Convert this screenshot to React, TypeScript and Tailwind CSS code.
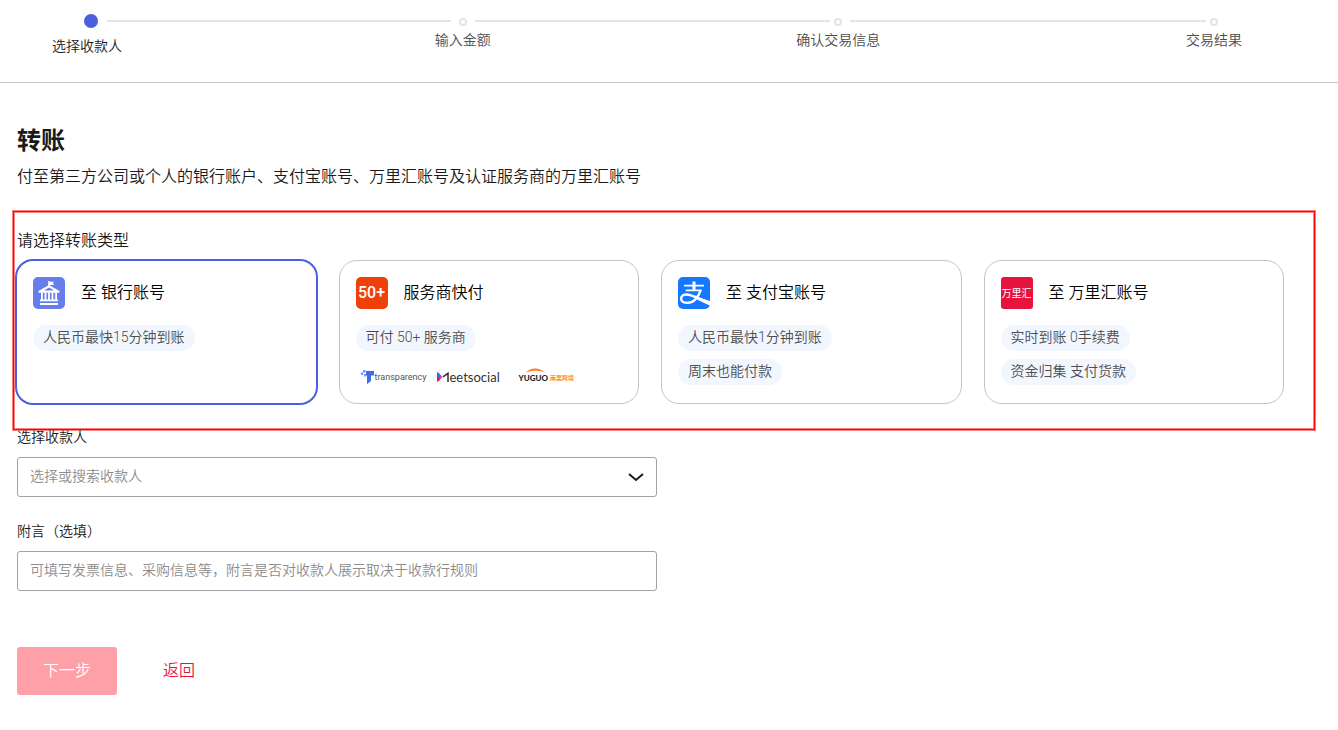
import type { ReactNode } from "react";
import clsx from "clsx";

const steps = ["选择收款人", "输入金额", "确认交易信息", "交易结果"];

const BankIcon = () => (
  <svg viewBox="0 0 32 32" className="size-8 shrink-0" aria-hidden="true">
    <rect width="32" height="32" rx="5" fill="#667eea" />
    <path d="M15.2 4h1.4v.8h4.3l-1 1.5 1 1.6h-4.3v1.4h-1.4z" fill="#fff" />
    <path d="M16 8 26.4 14v1.8H5.6V14z" fill="#fff" />
    <path d="m16 10.4 5 3.2H11z" fill="#667eea" />
    <path
      d="M8 15.5h1.8v7.5H8zM11.6 15.5h1.8v7.5h-1.8zM15.1 15.5h1.8v7.5h-1.8zM18.6 15.5h1.8v7.5h-1.8zM22.2 15.5H24v7.5h-1.8z"
      fill="#fff"
    />
    <path d="M7 22.6h18v1.6H7zM7 26h18v2H7z" fill="#fff" />
  </svg>
);

const AlipayIcon = () => (
  <svg viewBox="0 0 32 32" className="size-8 shrink-0" aria-hidden="true">
    <rect width="32" height="32" rx="5" fill="#1677ff" />
    <g fill="none" stroke="#fff">
      <path d="M6 8.7h20M7.7 13.4h16" strokeWidth="1.7" />
      <path d="M16 4.5v9" strokeWidth="3" />
      <path
        d="M22.7 13.2c-1.8 5.6-6.2 12.7-13.2 12.7-3.8 0-6.4-1.8-6.4-4.4 0-2.4 2.3-4 5.2-4 5.8 0 12 4 23.7 8.6"
        strokeWidth="2.4"
      />
    </g>
    <path d="M20 20.2 32 24v4.8l-13-6.3z" fill="#fff" />
  </svg>
);

const PartnerLogos = () => (
  <div className="mt-4 flex h-5 items-center pl-1">
    <div className="flex w-[76px] items-center">
      <svg viewBox="0 0 15 15" className="size-[15px]" aria-hidden="true">
        <path d="M6 1h8v4.5h-3V11l-4 3V5.5H6z" fill="#4169e8" />
        <path d="M3 0h2.5v2.5H3zM1 2.5h2V5H1zM4 4h2v2.5H4z" fill="#6f95ff" />
      </svg>
      <span className="text-[9px] font-normal leading-4 text-[#555]">transparency</span>
    </div>
    <div className="flex w-[82px] items-center">
      <svg viewBox="0 0 14 12" className="h-3 w-3.5" aria-hidden="true">
        <path d="M1 1v5h4.5L3.5 2.5z" fill="#1677ff" />
        <path d="M1 11V6h4.5L3.5 9.5z" fill="#ed1c35" />
        <path d="M3.5 3 6.5 6l-3 3z" fill="#d43bd0" />
        <path d="m7 5.8 5-3.5V11" fill="none" stroke="#333" strokeWidth="1.5" />
      </svg>
      <span className="font-['Lato'] text-[13px] font-normal leading-4 text-[#333]">eetsocial</span>
    </div>
    <div className="relative flex items-center gap-0.5 pl-px pt-0.5">
      <svg viewBox="0 0 20 5" className="absolute left-2 top-0 h-[5px] w-5" aria-hidden="true">
        <path d="M0 4.5C5-1 13-1 19 4.5 13 2 6 2 0 4.5z" fill="#ff7b1c" />
      </svg>
      <span className="font-['Lato'] text-[8px] font-black leading-4 text-[#222]">YUGUO</span>
      <span className="text-[6px] font-bold leading-4 text-[#ff8a35]">雨果跨境</span>
    </div>
  </div>
);

type TransferType = {
  id: string;
  title: string;
  icon: ReactNode;
  tags: string[];
  footer?: ReactNode;
};

const transferTypes: TransferType[] = [
  { id: "bank", title: "至 银行账号", icon: <BankIcon />, tags: ["人民币最快15分钟到账"] },
  {
    id: "provider",
    title: "服务商快付",
    icon: (
      <span className="flex size-8 shrink-0 items-center justify-center rounded-[5px] bg-[#f0400a] text-base font-medium text-white">
        50+
      </span>
    ),
    tags: ["可付 50+ 服务商"],
    footer: <PartnerLogos />,
  },
  { id: "alipay", title: "至 支付宝账号", icon: <AlipayIcon />, tags: ["人民币最快1分钟到账", "周末也能付款"] },
  {
    id: "worldfirst",
    title: "至 万里汇账号",
    icon: (
      <span className="flex size-8 shrink-0 items-center justify-center rounded-[3px] bg-[#e6143c] text-[10px] font-normal text-white">
        万里汇
      </span>
    ),
    tags: ["实时到账 0手续费", "资金归集 支付货款"],
  },
];

const StepBar = () => (
  <header className="h-[83px] border-b border-[#c4c4c4] pl-[45px] pr-[82px] pt-3">
    <ol className="flex text-sm">
      {steps.map((step, index) => {
        const active = index === 0;
        const last = index === steps.length - 1;
        return (
          <li key={step} className={last ? "w-[84px]" : "flex-1"} aria-current={active ? "step" : undefined}>
            <div className="flex h-[18px] items-center">
              <div className={clsx("flex w-[84px] shrink-0 justify-center", active ? "pl-2" : "pt-px")}>
                <span
                  className={clsx(
                    "rounded-full",
                    active ? "size-3.5 bg-[#4b5fe0]" : "size-2 border-2 border-[#e4e4e4]",
                  )}
                />
              </div>
              {!last && (
                <div
                  className={clsx(
                    "h-0.5 flex-1 bg-[#e4e4e4]",
                    active ? "-ml-[22px] -mr-[30px]" : "-ml-[30px] -mr-[34px]",
                  )}
                />
              )}
            </div>
            <p
              className={clsx(
                "w-[84px] whitespace-nowrap text-center leading-5",
                active ? "mt-1.5 text-[#1a1a1a]" : "text-[#4d4d4d]",
              )}
            >
              {step}
            </p>
          </li>
        );
      })}
    </ol>
  </header>
);

const TransferCard = ({ type, checked }: { type: TransferType; checked: boolean }) => (
  <label className="relative flex min-h-36 cursor-pointer flex-col rounded-[18px] border border-[#c4c4c4] p-4 has-checked:-m-px has-checked:border-2 has-checked:border-[#4b5fe0]">
    <input type="radio" name="transferType" value={type.id} defaultChecked={checked} className="sr-only" />
    <span className="flex items-center gap-4">
      {type.icon}
      <span className="text-base leading-6 text-black">{type.title}</span>
    </span>
    <span className="mt-4 flex flex-col items-start gap-2">
      {type.tags.map((tag) => (
        <span key={tag} className="rounded-full bg-[#f2f7ff] px-2.5 pb-0.5 text-sm leading-6 text-[#4d4d4d]">
          {tag}
        </span>
      ))}
    </span>
    {type.footer}
  </label>
);

const App = () => (
  <div className="bg-white font-['Roboto','Noto_Sans_CJK_SC',sans-serif] font-[350] text-[#1a1a1a]">
    <StepBar />
    <main className="pt-10">
      <div className="px-[17px]">
        <h1 className="text-2xl font-bold leading-9">转账</h1>
        <p className="mt-1.5 text-base leading-6">付至第三方公司或个人的银行账户、支付宝账号、万里汇账号及认证服务商的万里汇账号</p>
      </div>

      <form>
        <fieldset
          aria-labelledby="transfer-type"
          className="ml-[13px] mr-[23px] mt-[22px] border border-[#f00] pb-[25px] pl-0.5 pr-[30px] pt-[17px] shadow-[0_0_0_1px_#ff8080,inset_0_0_0_1px_#ff8080]"
        >
          <p id="transfer-type" className="mb-[7px] pl-px text-base leading-6">
            请选择转账类型
          </p>
          <div className="grid grid-cols-4 gap-[22px]">
            {transferTypes.map((type, index) => (
              <TransferCard key={type.id} type={type} checked={index === 0} />
            ))}
          </div>
        </fieldset>

        <div className="max-w-[674px] px-[17px] text-sm">
          <label htmlFor="payee" className="block leading-[14px]">
            选择收款人
          </label>
          <div className="relative mt-[13px]">
            <select
              id="payee"
              defaultValue=""
              className="h-10 w-full appearance-none rounded-[3px] border border-[#a3a3a3] bg-white px-3 pb-0.5 text-[#8c8c8c]"
            >
              <option value="">选择或搜索收款人</option>
            </select>
            <svg
              viewBox="0 0 16 10"
              className="pointer-events-none absolute right-[13px] top-[15px] h-2.5 w-4"
              fill="none"
              stroke="#1a1a1a"
              strokeWidth="2"
              aria-hidden="true"
            >
              <path d="m1 2 7 6 7-6" />
            </svg>
          </div>

          <label htmlFor="remark" className="mt-6 block leading-5">
            附言（选填）
          </label>
          <input
            id="remark"
            type="text"
            placeholder="可填写发票信息、采购信息等，附言是否对收款人展示取决于收款行规则"
            className="mt-2.5 h-10 w-full rounded-[3px] border border-[#a3a3a3] px-3 pb-0.5 placeholder:text-[#8c8c8c]"
          />
        </div>

        <div className="mt-14 flex items-center gap-[46px] px-[17px] text-base">
          <button type="submit" disabled className="h-12 w-[100px] rounded-[3px] bg-[#ff9fa8] text-white">
            下一步
          </button>
          <button type="button" className="text-[#e6143c]">
            返回
          </button>
        </div>
      </form>
    </main>
  </div>
);

export default App;
